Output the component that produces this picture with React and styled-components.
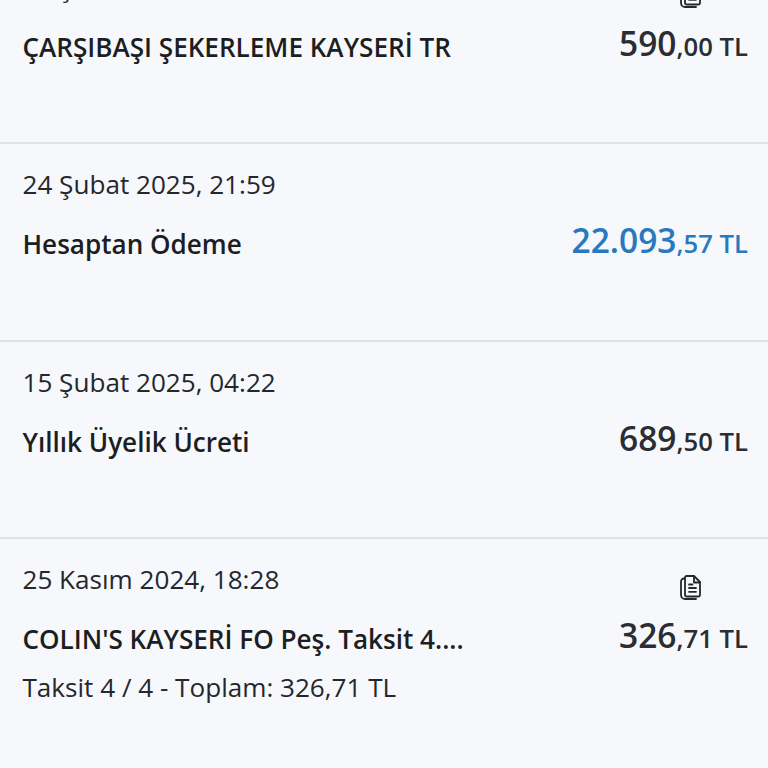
import React from "react";
import styled, { createGlobalStyle } from "styled-components";

const Global = createGlobalStyle`
  html, body { margin: 0; padding: 0; background: #f6f8fc; }
  body { width: 768px; height: 768px; overflow: hidden; font-family: "Open Sans", "Liberation Sans", sans-serif; }
`;

const List = styled.main`
  height: 768px;
  overflow: hidden;
  background: #f6f8fc;
`;

const Items = styled.ul`
  list-style: none;
  margin: -53.5px 0 0;
  padding: 0;
`;

const Row = styled.li`
  box-sizing: border-box;
  height: 197.5px;
  padding: 22px 20px 0 22.5px;
  border-bottom: 2px solid #dfe2e8;
  display: grid;
  grid-template-columns: 1fr auto;
  grid-template-rows: 53px 50px 41px;
  color: #25272c;
  &:last-child { border-bottom: 0; }
`;

const DateText = styled.div`
  font-size: 26.1px;
  line-height: 36px;
  color: #25272c;
`;

const IconSlot = styled.div`
  display: flex;
  justify-content: flex-end;
  align-items: flex-start;
  padding: 14px 47px 0 0;
  color: #25272c;
`;

const Title = styled.div`
  font-size: 26.1px;
  font-weight: 600;
  line-height: 50px;
  white-space: nowrap;
  color: #1c1e22;
`;

const Amount = styled.div`
  justify-self: end;
  font-size: 25.7px;
  font-weight: 600;
  line-height: 42px;
  white-space: nowrap;
  color: ${(p) => (p.$blue ? "#2a78bd" : "#2b2d33")};
`;

const Whole = styled.span`
  font-size: 33.5px;
`;

const Sub = styled.div`
  grid-column: 1 / -1;
  align-self: end;
  font-size: 26.1px;
  line-height: 36px;
  color: #25272c;
`;

const DocIcon = () => (
  <svg width="21" height="25" viewBox="0 0 21 25" fill="none" stroke="currentColor" strokeWidth="1.8" strokeLinejoin="round" strokeLinecap="round">
    <path d="M5 2.5A1.5 1.5 0 0 1 6.5 1h7.5l6 6v13a1.5 1.5 0 0 1-1.5 1.5h-12A1.5 1.5 0 0 1 5 20z" />
    <path d="M5 3.5H4A3 3 0 0 0 1 6.5V20a4 4 0 0 0 4 4h11" />
    <path d="M14 1.5V7.5h5.5" />
    <path d="M9 9.5h3.5M9 13h7M9 16.8h7" />
  </svg>
);

const rows = [
  { date: "28 Şubat 2025, 12:41", title: "ÇARŞIBAŞI ŞEKERLEME KAYSERİ TR", whole: "590", frac: ",00 TL", icon: true },
  { date: "24 Şubat 2025, 21:59", title: "Hesaptan Ödeme", whole: "22.093", frac: ",57 TL", blue: true },
  { date: "15 Şubat 2025, 04:22", title: "Yıllık Üyelik Ücreti", whole: "689", frac: ",50 TL" },
  { date: "25 Kasım 2024, 18:28", title: "COLIN'S KAYSERİ FO Peş. Taksit 4....", whole: "326", frac: ",71 TL", icon: true, sub: "Taksit 4 / 4 - Toplam: 326,71 TL" },
];

export default function App() {
  return (
    <List>
      <Global />
      <Items>
        {rows.map((r) => (
          <Row key={r.date}>
            <DateText>{r.date}</DateText>
            <IconSlot>{r.icon && <DocIcon />}</IconSlot>
            <Title>{r.title}</Title>
            <Amount $blue={r.blue}><Whole>{r.whole}</Whole>{r.frac}</Amount>
            {r.sub && <Sub>{r.sub}</Sub>}
          </Row>
        ))}
      </Items>
    </List>
  );
}
